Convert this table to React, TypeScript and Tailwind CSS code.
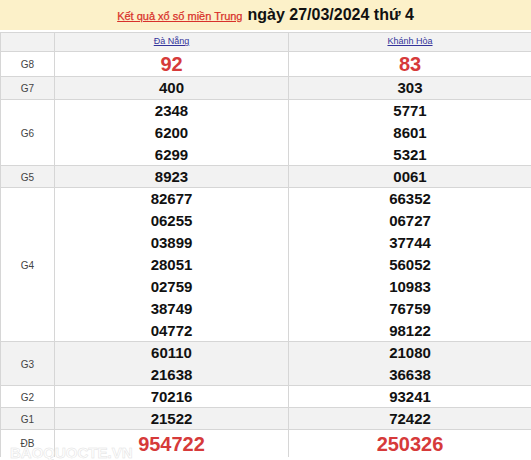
import React from 'react';

type Row = {
    label: string;
    h: string;
    big?: boolean;
    gray?: boolean;
    a: string[];
    b: string[];
};

const rows: Row[] = [
    { label: 'G8', h: 'h-[25px]', big: true, a: ['92'], b: ['83'] },
    { label: 'G7', h: 'h-[23px]', gray: true, a: ['400'], b: ['303'] },
    { label: 'G6', h: 'h-[66px]', a: ['2348', '6200', '6299'], b: ['5771', '8601', '5321'] },
    { label: 'G5', h: 'h-[22px]', gray: true, a: ['8923'], b: ['0061'] },
    {
        label: 'G4',
        h: 'h-[154px]',
        a: ['82677', '06255', '03899', '28051', '02759', '38749', '04772'],
        b: ['66352', '06727', '37744', '56052', '10983', '76759', '98122'],
    },
    { label: 'G3', h: 'h-[44px]', gray: true, a: ['60110', '21638'], b: ['21080', '36638'] },
    { label: 'G2', h: 'h-[22px]', a: ['70216'], b: ['93241'] },
    { label: 'G1', h: 'h-[22px]', gray: true, a: ['21522'], b: ['72422'] },
    { label: 'ĐB', h: 'h-[28px]', big: true, a: ['954722'], b: ['250326'] },
];

function Nums({ list, big }: { list: string[]; big?: boolean }) {
    return (
        <div className="flex flex-col items-center justify-center border-l border-[#d6d6d6]">
            {list.map((n) =>
                big ? (
                    <span key={n} className="text-[20px] font-bold leading-[24px] text-[#d63a3a]">
                        {n}
                    </span>
                ) : (
                    <span key={n} className="text-[15px] font-bold leading-[22px] text-[#111]">
                        {n}
                    </span>
                )
            )}
        </div>
    );
}

export default function App() {
    return (
        <div className="relative w-[531px] h-[460px] overflow-hidden bg-white font-['Liberation_Sans',Arial,sans-serif]">
            <div className="h-[30px] bg-[#fcf1c9] flex items-center justify-center gap-[5px]">
                <a className="text-[11px] text-[#d8312b] underline mt-[2px] [-webkit-text-stroke:0.25px_#d8312b]">
                    Kết quả xổ số miền Trung
                </a>
                <span className="text-[16px] font-bold text-[#111]">ngày 27/03/2024 thứ 4</span>
            </div>
            <div className="mt-[2px] border-l border-t border-[#d6d6d6]">
                <div className="grid grid-cols-[53px_234px_1fr] h-[18px] bg-[#f2f2f2]">
                    <div />
                    <div className="flex items-center justify-center border-l border-[#d6d6d6]">
                        <a className="text-[9px] text-[#33339a] underline">Đà Nẵng</a>
                    </div>
                    <div className="flex items-center justify-center border-l border-[#d6d6d6]">
                        <a className="text-[9px] text-[#33339a] underline">Khánh Hòa</a>
                    </div>
                </div>
                {rows.map((r) => (
                    <div
                        key={r.label}
                        className={`grid grid-cols-[53px_234px_1fr] border-t border-[#d6d6d6] ${r.h} ${
                            r.gray ? 'bg-[#f2f2f2]' : 'bg-white'
                        }`}
                    >
                        <div className="flex items-center justify-center text-[10px] text-[#444]">{r.label}</div>
                        <Nums list={r.a} big={r.big} />
                        <Nums list={r.b} big={r.big} />
                    </div>
                ))}
            </div>
            {/* watermark */}
            <div className="absolute left-[10px] top-[442px] text-[15px] font-bold text-white/40 [-webkit-text-stroke:0.5px_#e2e2e2]">
                BAOQUOCTE.VN
            </div>
        </div>
    );
}
